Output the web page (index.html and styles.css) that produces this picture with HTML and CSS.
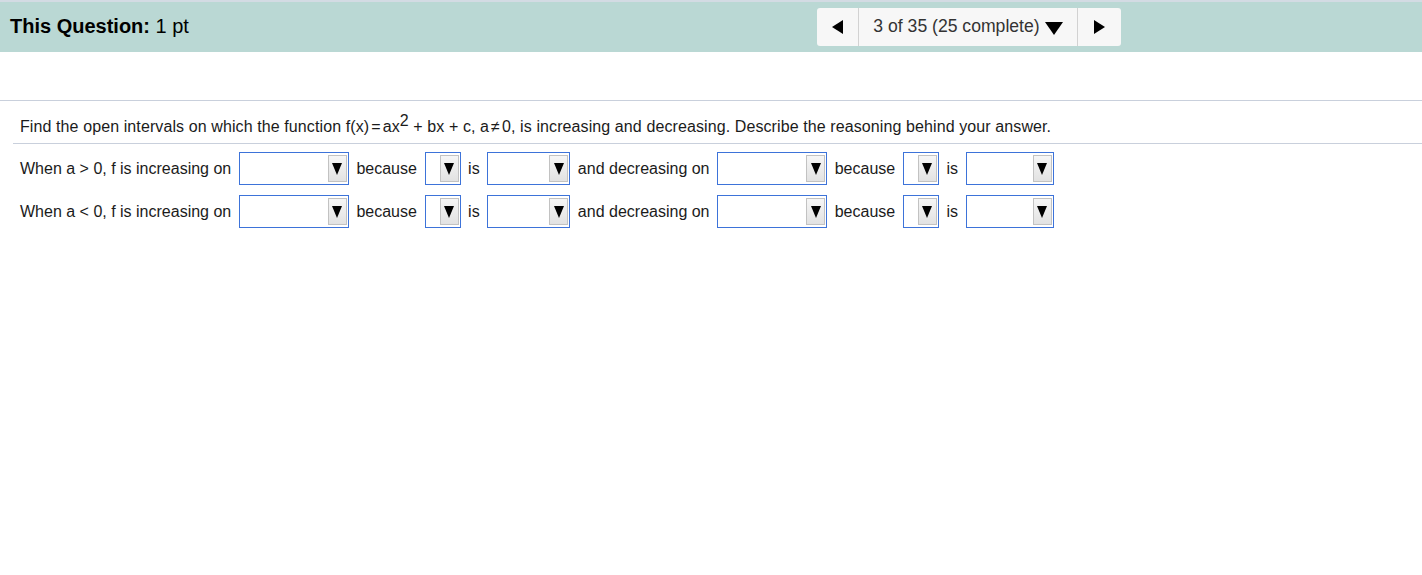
FILE: index.html
```html
<!DOCTYPE html>
<html>
<head>
<meta charset="utf-8">
<link rel="stylesheet" href="styles.css">
</head>
<body>
<div class="topline"></div>
<div class="header">
  <div class="title"><b>This Question:</b> 1 pt</div>
  <div class="nav">
    <div class="nav-btn"><span class="tri-left"></span></div>
    <div class="nav-mid">3 of 35 (25 complete)<span class="tri-down"></span></div>
    <div class="nav-btn right"><span class="tri-right"></span></div>
  </div>
</div>
<div class="spacer"></div>
<div class="rule"></div>
<div class="question">Find the open intervals on which the function f(x)<span class="eq">=</span>ax<sup>2</sup> + bx + c, a<span class="eq">≠</span>0, is increasing and decreasing. Describe the reasoning behind your answer.</div>
<div class="rule inset"></div>
<div class="rows">
  <div class="row">
    <span>When a &gt; 0, f is increasing on</span>
    <div class="sel w110"><span class="arrow"><i></i></span></div>
    <span>because</span>
    <div class="sel w36"><span class="arrow"><i></i></span></div>
    <span>is</span>
    <div class="sel w83"><span class="arrow"><i></i></span></div>
    <span>and decreasing on</span>
    <div class="sel w110"><span class="arrow"><i></i></span></div>
    <span>because</span>
    <div class="sel w36"><span class="arrow"><i></i></span></div>
    <span>is</span>
    <div class="sel w88"><span class="arrow"><i></i></span></div>
  </div>
  <div class="row">
    <span>When a &lt; 0, f is increasing on</span>
    <div class="sel w110"><span class="arrow"><i></i></span></div>
    <span>because</span>
    <div class="sel w36"><span class="arrow"><i></i></span></div>
    <span>is</span>
    <div class="sel w83"><span class="arrow"><i></i></span></div>
    <span>and decreasing on</span>
    <div class="sel w110"><span class="arrow"><i></i></span></div>
    <span>because</span>
    <div class="sel w36"><span class="arrow"><i></i></span></div>
    <span>is</span>
    <div class="sel w88"><span class="arrow"><i></i></span></div>
  </div>
</div>
</body>
</html>
```

FILE: styles.css
```css
html, body {
  margin: 0;
  padding: 0;
  background: #ffffff;
  font-family: "Liberation Sans", Arial, sans-serif;
  color: #1b1b1b;
}
.topline {
  height: 2px;
  background: #d3dbe3;
}
.header {
  height: 50px;
  background: #bad8d4;
  display: flex;
  align-items: center;
}
.title {
  width: 807px;
  padding-left: 10px;
  padding-bottom: 2px;
  font-size: 20px;
  color: #000;
  box-sizing: border-box;
}
.title b { font-weight: bold; }
.nav {
  display: flex;
  height: 38px;
  background: #f7f7f7;
  border-radius: 3px;
  margin-left: 10px;
}
.nav-btn {
  width: 41px;
  display: flex;
  align-items: center;
  justify-content: center;
}
.nav-btn.right { width: 43px; }
.nav-mid {
  width: 220px;
  border-left: 1px solid #d2d2d2;
  border-right: 1px solid #d2d2d2;
  display: flex;
  align-items: center;
  justify-content: center;
  font-size: 17.6px;
  color: #333;
  padding-bottom: 2px;
  box-sizing: border-box;
}
.tri-left {
  width: 0; height: 0;
  border-top: 7px solid transparent;
  border-bottom: 7px solid transparent;
  border-right: 11px solid #000;
}
.tri-right {
  width: 0; height: 0;
  border-top: 7px solid transparent;
  border-bottom: 7px solid transparent;
  border-left: 11px solid #000;
}
.tri-down {
  width: 0; height: 0;
  margin-left: 5px;
  margin-top: 4px;
  border-left: 9px solid transparent;
  border-right: 9px solid transparent;
  border-top: 13px solid #000;
}
.spacer { height: 48px; }
.rule {
  height: 1px;
  background: #c9d0dc;
}
.rule.inset { margin-left: 13px; }
.question {
  font-size: 16px;
  letter-spacing: 0.1px;
  padding: 17px 0 0 20px;
  height: 25px;
}
.question sup {
  font-size: 16px;
  vertical-align: 0;
  position: relative;
  top: -6px;
  line-height: 0;
}
.eq { margin: 0 2px; }
.rows {
  padding: 8px 0 0 20px;
}
.row {
  display: flex;
  align-items: center;
  gap: 7.6px;
  height: 33px;
  margin-bottom: 10px;
  font-size: 16px;
  white-space: nowrap;
}
.sel {
  height: 33px;
  box-sizing: border-box;
  border: 1px solid #3d73d9;
  background: #fff;
  display: flex;
  justify-content: flex-end;
  align-items: center;
  padding-right: 1px;
}
.w110 { width: 110px; }
.w36 { width: 36px; }
.w83 { width: 83px; }
.w88 { width: 88px; }
.arrow {
  width: 19px;
  height: 27px;
  box-sizing: border-box;
  border: 1px solid #c2c2c2;
  background: linear-gradient(#f6f6f6, #e2e2e2);
  display: flex;
  align-items: center;
  justify-content: center;
}
.arrow i {
  width: 0; height: 0;
  border-left: 5px solid transparent;
  border-right: 5px solid transparent;
  border-top: 12px solid #000;
}
```
